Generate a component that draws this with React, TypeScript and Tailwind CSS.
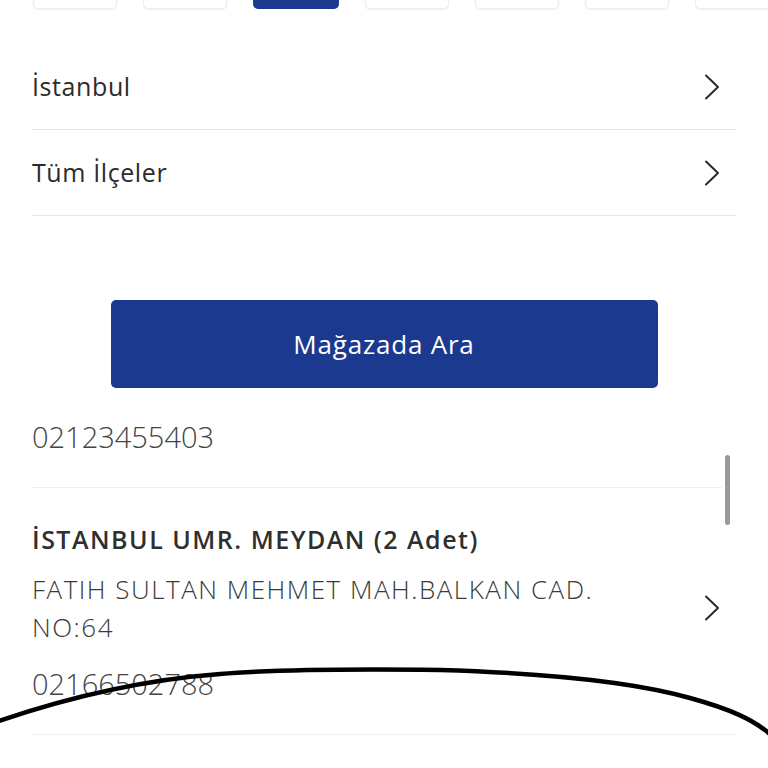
import React from "react";

const Chevron = () => (
  <svg width="16" height="26" viewBox="0 0 16 26" fill="none" className="shrink-0">
    <path d="M2 1.5 L14 13 L2 24.5" stroke="#2b2b2b" strokeWidth="2" strokeLinecap="round" strokeLinejoin="round" />
  </svg>
);

export default function App() {
  const tabs = [0, 1, 2, 3, 4, 5, 6];
  return (
    <div
      className="relative w-[768px] h-[768px] overflow-hidden bg-white"
      style={{ fontFamily: "'Open Sans', Lato, sans-serif" }}
    >
      {/* tab strip cut off at top */}
      <div className="flex gap-[26px] pl-[33px] -mt-[31px]">
        {tabs.map((t) =>
          t === 2 ? (
            <div key={t} className="shrink-0 w-[86px] h-[40px] rounded-[5px] bg-[#1b3a8f]" />
          ) : (
            <div
              key={t}
              className="shrink-0 w-[84px] h-[40px] rounded-[5px] bg-white border border-[#ececec] shadow-[0_1px_2px_rgba(0,0,0,0.06)]"
            />
          )
        )}
      </div>

      <div className="px-[32px] mt-[35px]">
        <div className="flex items-center justify-between h-[86px] border-b border-[#e6e6e6] pr-[16px]">
          <span className="text-[25px] tracking-[0.6px] text-[#2b2b2b] leading-none">İstanbul</span>
          <Chevron />
        </div>
        <div className="flex items-center justify-between h-[86px] border-b border-[#e6e6e6] pr-[16px]">
          <span className="text-[25px] tracking-[0.6px] text-[#2b2b2b] leading-none">Tüm İlçeler</span>
          <Chevron />
        </div>

        <div className="flex justify-center mt-[84px]">
          <button className="w-[547px] h-[88px] rounded-[5px] bg-[#1b3a8f] text-white text-[26px] tracking-[0.8px] leading-none">
            Mağazada Ara
          </button>
        </div>

        <div className="pt-[34px] pb-[36px] border-b border-[#f0f0f0] mr-[14px]">
          <div className="text-[29px] leading-none text-[#444] font-light">02123455403</div>
        </div>

        <div className="pt-[39px] pb-[36px] border-b border-[#f0f0f0]">
          <div className="text-[25px] leading-none text-[#2f2f2f] font-semibold tracking-[1.5px]">
            İSTANBUL UMR. MEYDAN (2 Adet)
          </div>
          <div className="flex items-center justify-between mt-[18px] pr-[16px]">
            <div className="text-[26px] leading-[38px] text-[#3a3a3a] font-light tracking-[1.5px]">
              FATIH SULTAN MEHMET MAH.BALKAN CAD.
              <br />
              NO:64
            </div>
            <Chevron />
          </div>
          <div className="mt-[23px] text-[29px] leading-none text-[#444] font-light">02166502788</div>
        </div>
      </div>

      {/* scrollbar */}
      <div className="absolute left-[725px] top-[455px] w-[5px] h-[70px] rounded-full bg-[#9a9a9a]" />

      {/* hand-drawn stroke */}
      <svg className="absolute left-0 top-0 pointer-events-none" width="768" height="768" viewBox="0 0 768 768">
        <path
          d="M -4 722 C 60 700, 140 680, 220 674 C 280 669, 360 669, 440 670 C 540 673, 630 681, 690 698 C 730 709, 755 720, 772 736"
          stroke="#000"
          strokeWidth="4.5"
          fill="none"
          strokeLinecap="round"
        />
      </svg>
    </div>
  );
}
